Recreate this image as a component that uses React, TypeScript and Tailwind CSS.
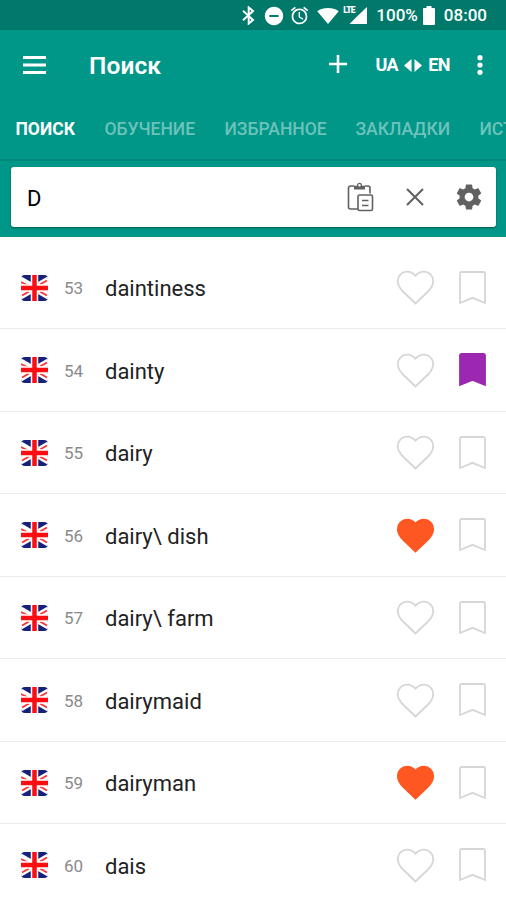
import { useState } from "react";
import { MdAlarm, MdDoNotDisturbOn } from "react-icons/md";
import { clsx } from "clsx";

type Word = {
  id: number;
  text: string;
  liked?: boolean;
  saved?: boolean;
};

const WORDS: Word[] = [
  { id: 53, text: "daintiness" },
  { id: 54, text: "dainty", saved: true },
  { id: 55, text: "dairy" },
  { id: 56, text: "dairy\\ dish", liked: true },
  { id: 57, text: "dairy\\ farm" },
  { id: 58, text: "dairymaid" },
  { id: 59, text: "dairyman", liked: true },
  { id: 60, text: "dais" },
];

const TABS = [
  { label: "ПОИСК", width: "w-[59px]" },
  { label: "ОБУЧЕНИЕ", width: "w-[90px]" },
  { label: "ИЗБРАННОЕ", width: "w-[101px]" },
  { label: "ЗАКЛАДКИ", width: "w-[94px]" },
  { label: "ИСТОРИЯ", width: "w-[90px]" },
];

function StatusBar() {
  return (
    <div className="flex h-[30px] items-center justify-end bg-[#00796b] pr-[19px] pt-px">
      <svg className="mr-[8px] h-[19px] w-[13px]" viewBox="0 0 13 19" fill="none" stroke="currentColor" strokeWidth="2">
        <path d="M1 4.800 11 14l-4.300 3.600V1.400L11 5 1 14.200" />
      </svg>
      <MdDoNotDisturbOn className="mr-[4px] size-[22px]" />
      <MdAlarm className="mr-[7px] size-[21px]" />
      <svg className="mr-[4px] h-4 w-[22px]" viewBox="0 0 22 16" fill="currentColor">
        <path d="M11 16 0.300 3.200C3.200 1.100 6.900 0 11 0s7.800 1.100 10.700 3.200z" />
      </svg>
      <div className="relative mr-[9px] h-[17px] w-[24px]">
        <svg className="size-full" viewBox="0 0 24 17" fill="currentColor">
          <path d="M24 0v17H6.500L14 9.500z" />
        </svg>
        <span className="absolute left-0 top-[-1px] text-[8.500px] font-black leading-[9px] tracking-[-0.900px]">LTE</span>
      </div>
      <span className="mr-[5px] text-[17px] font-medium leading-none">100%</span>
      <svg className="mr-[9px] h-[19px] w-[12px]" viewBox="0 0 12 19" fill="currentColor">
        <path d="M3.500 0h5v2H11a1 1 0 0 1 1 1v15a1 1 0 0 1-1 1H1a1 1 0 0 1-1-1V3a1 1 0 0 1 1-1h2.500z" />
      </svg>
      <span className="text-[17px] font-medium leading-none">08:00</span>
    </div>
  );
}

function Toolbar() {
  return (
    <div className="flex h-[70px] items-center pl-[23px] pr-[23px]">
      <button type="button" aria-label="Меню">
        <svg className="h-[18px] w-[23px]" viewBox="0 0 23 18" fill="currentColor">
          <path d="M0 0h23v3H0zM0 7.500h23v3H0zM0 15h23v3H0z" />
        </svg>
      </button>
      <h1 className="ml-[43px] mt-[3px] text-[24.500px] font-semibold leading-none tracking-[0.1px]">Поиск</h1>
      <button type="button" aria-label="Добавить" className="ml-auto mt-[-2px]">
        <svg className="size-[18px]" viewBox="0 0 18 18" fill="currentColor">
          <path d="M7.700 0h2.600v7.700H18v2.600h-7.700V18H7.700v-7.700H0V7.700h7.700z" />
        </svg>
      </button>
      <button type="button" className="ml-[28px] flex items-center text-[18px] font-bold leading-none tracking-[-0.5px]">
        <span>UA</span>
        <svg className="mx-[6px] h-[13px] w-[18px]" viewBox="0 0 18 13" fill="currentColor">
          <path d="M7.500 0v13L0 6.500zM10.500 0v13L18 6.500z" />
        </svg>
        <span>EN</span>
      </button>
      <button type="button" aria-label="Ещё" className="ml-[27px]">
        <svg className="h-[20px] w-[6px]" viewBox="0 0 6 20" fill="currentColor">
          <circle cx="3" cy="2.700" r="2.600" />
          <circle cx="3" cy="10" r="2.600" />
          <circle cx="3" cy="17.300" r="2.600" />
        </svg>
      </button>
    </div>
  );
}

function SearchField() {
  const [query, setQuery] = useState("D");

  return (
    <div className="h-[78px] border-t-2 border-[#00897b] px-[11px] pr-[10px] pt-[6px]">
      <div className="flex h-[60px] items-center rounded-[3px] bg-white pl-[16px] pr-[12.500px] text-[#616161] shadow-[0_1px_2px_rgba(0,0,0,0.4)]">
        <input
          value={query}
          onChange={(e) => setQuery(e.target.value)}
          className="min-w-0 flex-1 bg-transparent pt-[2px] text-[22px] text-black outline-none"
        />
        <svg className="size-[30px]" viewBox="0 0 30 30" fill="none" stroke="currentColor" strokeWidth="1.600">
          <path d="M12 27H4.500a2 2 0 0 1-2-2V6a2 2 0 0 1 2-2H8M19 4h3a2 2 0 0 1 2 2v5.500" />
          <path d="M8 7.500V3.800h3.200a2.400 2.400 0 0 1 4.600 0H19V7.500z" fill="currentColor" stroke="none" />
          <circle cx="13.500" cy="3.300" r="1.900" fill="#fff" strokeWidth="1.300" />
          <rect x="12" y="13" width="14.500" height="15.500" rx="1.500" />
          <path d="M16 18.500h6.500M16 23.500h6.500" />
        </svg>
        <svg className="ml-[30px] size-[18px]" viewBox="0 0 18 18" stroke="currentColor" strokeWidth="2">
          <path d="M1 1l16 16M17 1 1 17" />
        </svg>
        <svg className="ml-[30px] size-[30px]" viewBox="0 0 24 24" fill="currentColor">
          <path d="M19.430 12.980c.04-.32.07-.64.07-.98s-.03-.66-.07-.98l2.110-1.650c.19-.15.24-.42.12-.64l-2-3.460c-.12-.22-.39-.3-.61-.22l-2.490 1c-.52-.4-1.080-.73-1.690-.98l-.38-2.650C14.460 2.180 14.250 2 14 2h-4c-.25 0-.46.18-.49.42l-.38 2.650c-.61.25-1.170.59-1.690.98l-2.490-1c-.23-.09-.49 0-.61.22l-2 3.460c-.13.22-.07.49.12.64l2.110 1.650c-.04.32-.07.65-.07.98s.03.66.07.98l-2.110 1.650c-.19.15-.24.42-.12.64l2 3.460c.12.22.39.3.61.22l2.490-1c.52.4 1.080.73 1.690.98l.38 2.650c.03.24.24.42.49.42h4c.25 0 .46-.18.49-.42l.38-2.650c.61-.25 1.170-.59 1.690-.98l2.490 1c.23.09.49 0 .61-.22l2-3.460c.12-.22.07-.49-.12-.64l-2.110-1.650zM12 15.500c-1.930 0-3.500-1.570-3.500-3.500s1.570-3.500 3.500-3.500 3.500 1.570 3.500 3.500-1.570 3.500-3.500 3.500z" />
        </svg>
      </div>
    </div>
  );
}

function Flag() {
  return (
    <svg className="h-[26px] w-[27px] shrink-0 rounded-[4px]" viewBox="0 0 27 26">
      <rect width="27" height="26" fill="#17207a" />
      <path d="M-4 3 31 23M31 3-4 23" stroke="#fff" strokeWidth="7" />
      <path d="M0 7 7 10.500M19 9.500 26 5.500M1 20.500 8 16.500M19 16.500 26 20.500" stroke="#f33" strokeWidth="1.800" />
      <path d="M13.500 0v26M0 13h27" stroke="#fff" strokeWidth="7.500" />
      <path d="M13.500 0v26M0 13h27" stroke="#fb0d12" strokeWidth="4.500" />
    </svg>
  );
}

function WordRow({ word, onLike, onSave }: { word: Word; onLike: () => void; onSave: () => void }) {
  return (
    <li className="flex h-[82.5px] items-center border-b border-[#ebebeb] pl-[21px] pr-[20px] pt-px">
      <Flag />
      <span className="ml-[16px] w-[41px] pt-[2px] text-[17px] text-[#8a8a8a]">{word.id}</span>
      <span className="flex-1 pt-[2px] text-[22px] text-[#222]">{word.text}</span>
      <button type="button" onClick={onLike} aria-label="В избранное">
        <svg
          className={clsx("h-[35px] w-[39px]", word.liked ? "fill-[#ff5722] stroke-[#ff5722]" : "fill-none stroke-[#d6d6d6]")}
          viewBox="0 0 39 35"
          strokeWidth="1.800"
        >
          <path d="M19.500 33.500 7.500 22C3.500 18.200 1.800 15 1.800 11c0-5.400 4.100-9.400 9.300-9.400 3.300 0 6.300 1.500 8.400 4.200 2.100-2.700 5.100-4.200 8.400-4.200 5.200 0 9.300 4 9.300 9.400 0 4-1.700 7.200-5.700 11z" />
        </svg>
      </button>
      <button type="button" onClick={onSave} aria-label="В закладки" className="ml-[24px]">
        <svg
          className={clsx("h-[34px] w-[27px]", word.saved ? "fill-[#9c27b0] stroke-[#9c27b0]" : "fill-none stroke-[#d6d6d6]")}
          viewBox="0 0 27 34"
          strokeWidth="1.800"
        >
          <path d="M1 32V2.500A1.500 1.500 0 0 1 2.500 1h22A1.500 1.500 0 0 1 26 2.500V32l-12.500-5.200z" />
        </svg>
      </button>
    </li>
  );
}

export default function App() {
  const [words, setWords] = useState(WORDS);
  const [tab, setTab] = useState("ПОИСК");

  function toggle(id: number, key: "liked" | "saved") {
    setWords((prev) => prev.map((w) => (w.id === id ? { ...w, [key]: !w[key] } : w)));
  }

  return (
    <div className="flex h-[900px] w-[506px] flex-col overflow-hidden bg-white font-[Roboto,sans-serif]">
      <header className="shrink-0 bg-[#009688] text-white">
        <StatusBar />
        <Toolbar />
        <nav className="flex h-[59px] items-center gap-[30px] overflow-hidden pl-[15.500px]">
          {TABS.map((t) => (
            <button
              key={t.label}
              type="button"
              onClick={() => setTab(t.label)}
              className={clsx(
                "shrink-0 whitespace-nowrap text-left text-[17.5px] leading-none",
                t.width,
                tab === t.label ? "font-bold text-white" : "font-medium text-[#6dc3ba]"
              )}
            >
              {t.label}
            </button>
          ))}
        </nav>
        <SearchField />
      </header>

      <ul className="pt-[9.500px]">
        {words.map((w) => (
          <WordRow key={w.id} word={w} onLike={() => toggle(w.id, "liked")} onSave={() => toggle(w.id, "saved")} />
        ))}
      </ul>
    </div>
  );
}
